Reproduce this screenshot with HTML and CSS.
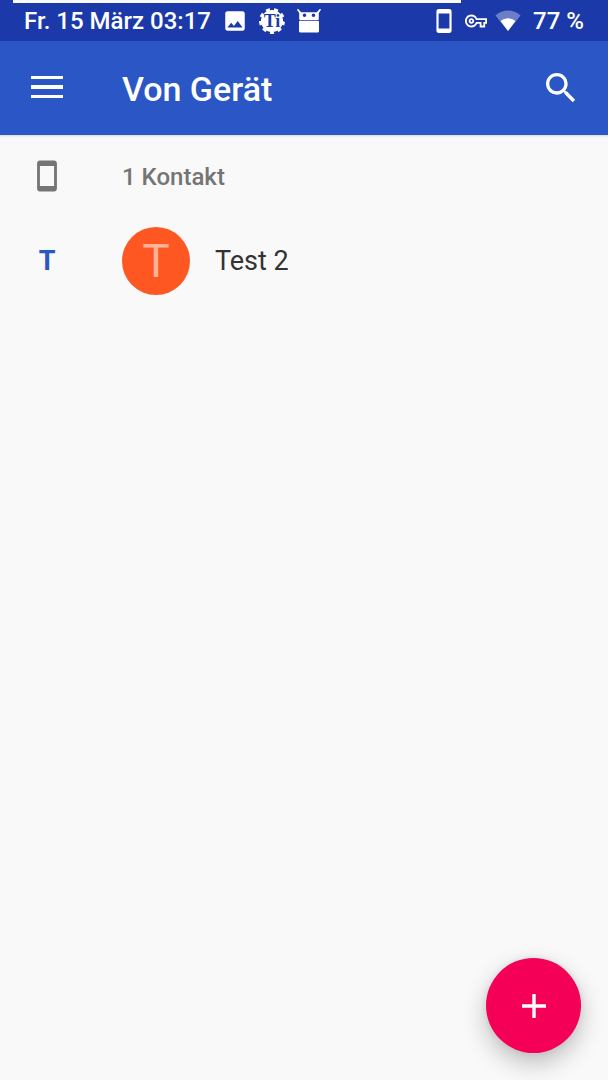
FILE: index.html
```html
<!DOCTYPE html>
<html lang="de">
<head>
<meta charset="utf-8">
<meta name="viewport" content="width=device-width, initial-scale=1">
<title>Kontakte</title>
<link rel="stylesheet" href="styles.css">
</head>
<body>
<div class="screen">
  <div class="status-bar">
    <div class="status-strip"></div>
    <div class="status-group status-group-start">
      <span>Fr. 15 März 03:17</span>
      <svg class="status-icon" viewBox="0 0 24 24" aria-hidden="true"><path d="M21 19V5c0-1.100-.9-2-2-2H5c-1.100 0-2 .9-2 2v14c0 1.100.9 2 2 2h14c1.100 0 2-.9 2-2zM8.500 13.500l2.500 3.010L14.500 12l4.500 6H5l3.500-4.500z"/></svg>
      <svg class="status-icon" viewBox="0 0 26 26" aria-hidden="true">
        <circle cx="13" cy="13" r="11"/>
        <circle class="cog-teeth" cx="13" cy="13" r="11" pathLength="90"/>
        <text class="cog-text" x="13" y="19" text-anchor="middle">Ti</text>
      </svg>
      <svg class="status-icon" viewBox="0 0 26 26" aria-hidden="true"><path fill-rule="evenodd" d="M2 .8l3.200 3.400h15.600L24 .8l1 .9L22.800 5V11q0 1-1 1H4.200q-1 0-1-1V5L1 1.700zM8.500 5.500a1.800 1.800 0 1 0 0 3.600 1.800 1.800 0 0 0 0-3.600zm9 0a1.800 1.800 0 1 0 0 3.600 1.800 1.800 0 0 0 0-3.600zM4 12.800h18q1 0 1 1v9.200q0 1.500-1.500 1.500h-17Q3 24.500 3 23V13.800q0-1 1-1z"/></svg>
    </div>
    <div class="status-group status-group-end">
      <svg class="status-icon" viewBox="0 0 24 24" aria-hidden="true"><path d="M17 1.010L7 1c-1.100 0-1.990.9-1.990 2v18c0 1.100.89 2 1.990 2h10c1.100 0 2-.9 2-2V3c0-1.100-.9-1.990-2-1.990zM17 19H7V5h10v14z"/></svg>
      <svg class="status-icon status-icon-key" viewBox="0 0 24 24" aria-hidden="true"><path d="M22 19h-6v-4h-2.680c-1.140 2.420-3.600 4-6.320 4-3.860 0-7-3.140-7-7s3.140-7 7-7c2.720 0 5.170 1.580 6.320 4H24v6h-2v4zm-4-2h2v-4h2v-2H11.940l-.23-.67C11.010 8.340 9.110 7 7 7c-2.760 0-5 2.240-5 5s2.240 5 5 5c2.110 0 4.010-1.340 4.710-3.330l.23-.67H18v4zM7 15c-1.650 0-3-1.350-3-3s1.350-3 3-3 3 1.350 3 3-1.350 3-3 3zm0-4c-.55 0-1 .45-1 1s.45 1 1 1 1-.45 1-1-.45-1-1-1z"/></svg>
      <svg class="status-icon" viewBox="0 0 26 26" aria-hidden="true"><path opacity=".35" d="M13 23L.5 7.500Q6 2.500 13 2.500t12.500 5z"/><path d="M13 23L5.500 13Q8.500 10.200 13 10.200T20.500 13z"/></svg>
      <span class="battery">77 %</span>
    </div>
  </div>
  <header class="app-bar">
    <button class="icon-button lead" type="button" aria-label="Menü"><svg class="menu-icon" viewBox="0 0 32 22"><path d="M0 0h32v3H0zM0 9h32v4H0zM0 19h32v3H0z"/></svg></button>
    <h1 class="title">Von Gerät</h1>
    <button class="icon-button search" type="button" aria-label="Suchen"><svg class="search-icon" viewBox="0 0 24 24"><path d="M15.500 14h-.79l-.28-.27C15.410 12.590 16 11.110 16 9.500 16 5.910 13.090 3 9.500 3S3 5.910 3 9.500 5.910 16 9.500 16c1.610 0 3.090-.59 4.230-1.570l.27.28v.79l5 4.990L20.490 19l-4.990-5zm-6 0C7.010 14 5 11.990 5 9.500S7.010 5 9.500 5 14 7.010 14 9.500 11.990 14 9.500 14z"/></svg></button>
  </header>
  <main class="contacts">
    <div class="summary">
      <div class="lead"><svg class="device-icon" viewBox="0 0 24 24" aria-hidden="true"><path d="M17 1.010L7 1c-1.100 0-1.990.9-1.990 2v18c0 1.100.89 2 1.990 2h10c1.100 0 2-.9 2-2V3c0-1.100-.9-1.990-2-1.990zM17 19H7V5h10v14z"/></svg></div>
      <h2 class="count">1 Kontakt</h2>
    </div>
    <a class="contact" href="#test-2">
      <span class="lead section-letter">T</span>
      <span class="avatar" aria-hidden="true">T</span>
      <span class="name">Test 2</span>
    </a>
  </main>
  <button class="fab" type="button" aria-label="Kontakt hinzufügen"><svg class="add-icon" viewBox="0 0 24 24"><path d="M10.300 0h3.400v10.300H24v3.400H13.700V24h-3.400V13.700H0v-3.400h10.300z"/></svg></button>
</div>
</body>
</html>
```
FILE: styles.css
```css
* { box-sizing: border-box; }

body {
  margin: 0;
  background: #f9f9f9;
  color: #333;
  font-family: Roboto, "Noto Sans", sans-serif;
}

svg { display: block; fill: currentColor; }

button { padding: 0; border: 0; background: none; color: inherit; cursor: pointer; }

.screen { min-height: 100vh; }

.status-bar {
  position: relative;
  display: flex;
  justify-content: space-between;
  align-items: center;
  height: 41px;
  padding: 1px 24px 0;
  background: #1c39a9;
  color: #fff;
  font-size: 24px;
  font-weight: 500;
  line-height: 28px;
  white-space: nowrap;
}

.status-strip {
  position: absolute;
  top: 0;
  left: 13px;
  right: 147px;
  height: 3px;
  background: #f9f9f9;
}

.status-group { display: flex; align-items: center; }
.status-group-start { gap: 11px; }
.status-group-end { gap: 8px; }
.status-icon { width: 26px; height: 26px; }
.status-icon-key { width: 22px; height: 22px; }
.battery { margin-left: 4px; }

.cog-teeth {
  fill: none;
  stroke: #fff;
  stroke-width: 4;
  stroke-dasharray: 5 5;
}

.cog-text {
  fill: #1c39a9;
  font-family: "Liberation Serif", serif;
  font-size: 18px;
  font-weight: 700;
}

.app-bar {
  display: flex;
  align-items: center;
  height: 94px;
  background: #2a56c6;
  color: #fff;
  box-shadow: 0 1px 2px rgba(0, 0, 0, 0.15);
}

.lead {
  display: flex;
  flex: none;
  justify-content: center;
  width: 94px;
  margin-right: 28px;
}

.icon-button { align-items: center; height: 92px; }
.menu-icon { width: 32px; height: 22px; margin-bottom: 2px; }
.search { width: 40px; margin: 0 27px 0 auto; }
.search-icon { width: 40px; height: 40px; }

.title {
  margin: 0;
  padding-top: 2px;
  font-size: 34px;
  font-weight: 500;
  line-height: 40px;
}

.summary { display: flex; align-items: center; height: 82px; }
.device-icon { width: 34px; height: 34px; fill: #757575; }

.count {
  margin: 0;
  padding-top: 2px;
  color: #757575;
  font-size: 24px;
  font-weight: 500;
  line-height: 28px;
}

.contact {
  display: flex;
  align-items: center;
  height: 88px;
  color: #333;
  text-decoration: none;
}

.section-letter { color: #2a56c6; font-size: 27px; font-weight: 700; }

.avatar {
  display: flex;
  align-items: center;
  justify-content: center;
  flex: none;
  width: 68px;
  height: 68px;
  margin-right: 25px;
  border-radius: 50%;
  background: #ff5722;
  color: #ffb299;
  font-size: 46px;
  line-height: 68px;
}

.name { font-size: 27px; line-height: 32px; }

.fab {
  position: fixed;
  right: 27px;
  bottom: 27px;
  display: flex;
  align-items: center;
  justify-content: center;
  width: 95px;
  height: 95px;
  border-radius: 50%;
  background: #f50057;
  color: #fff;
  box-shadow: 0 10px 24px rgba(0, 0, 0, 0.24), 0 0 8px rgba(0, 0, 0, 0.08);
}

.add-icon { width: 24px; height: 24px; }
```
